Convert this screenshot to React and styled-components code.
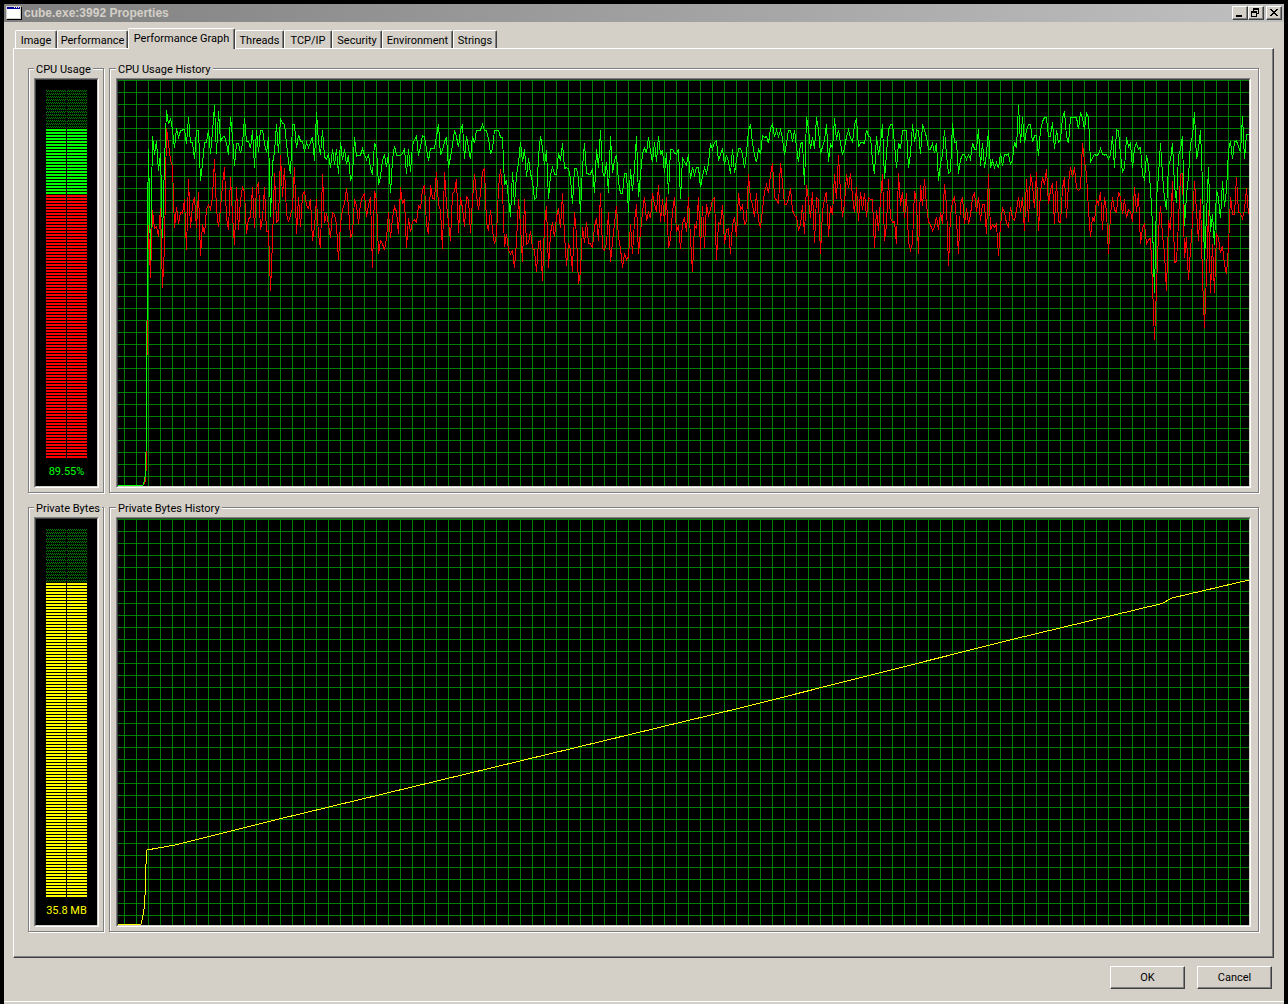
import React, { useState } from "react";
import styled, { createGlobalStyle, css } from "styled-components";

const GlobalStyle = createGlobalStyle`
  * {
    box-sizing: border-box;
  }

  body {
    margin: 0;
    background: #000;
  }

  body, button {
    font-family: Roboto, "Liberation Sans", Arial, sans-serif;
    font-size: 11px;
    line-height: 14px;
    color: #000;
  }
`;

const raised = css`
  border: 1px solid;
  border-color: #fff #404040 #404040 #fff;
  box-shadow: inset -1px -1px 0 #808080;
`;

// One green pixel per row, shifted on every other row
const hatch =
  "url(\"data:image/svg+xml,%3Csvg xmlns='http://www.w3.org/2000/svg' width='2' height='2' shape-rendering='crispEdges'%3E%3Cpath d='M0 0h1v1H0zM1 1h1v1H1z' fill='%23008000'/%3E%3C/svg%3E\")";

const Window = styled.div`
  display: flex;
  flex-direction: column;
  min-height: 100vh;
  border: 4px solid #000;
  border-bottom: 0;
  background: #d4d0c8;
`;

const TitleBar = styled.header`
  display: flex;
  align-items: center;
  height: 18px;
  padding: 0 2px;
  background: linear-gradient(90deg, #808080, #c0c0c0);
`;

const Title = styled.h1`
  flex: 1;
  margin: 0;
  padding-left: 2px;
  font-family: "Liberation Sans", Arial, sans-serif;
  font-size: 12px;
  font-weight: bold;
  line-height: 18px;
  color: #d4d0c8;
`;

const TitleButton = styled.button`
  ${raised}
  display: flex;
  width: 16px;
  height: 14px;
  margin-left: ${(props) => (props.$apart ? "2px" : "0")};
  padding: 0;
  background: #d4d0c8;
`;

const TabList = styled.div`
  display: flex;
  align-items: flex-end;
  height: 21px;
  margin: 6px 11px -1px;
  position: relative;
`;

const Tab = styled.button`
  width: ${(props) => props.$width}px;
  height: ${(props) => (props.$active ? "21px" : "18px")};
  margin-bottom: ${(props) => (props.$active ? "0" : "1px")};
  padding: ${(props) => (props.$active ? "0" : "2px 0 0")};
  border: 1px solid;
  border-color: #fff #404040 transparent #fff;
  border-bottom: 0;
  border-radius: 2px 2px 0 0;
  box-shadow: inset -1px 0 0 #808080;
  background: #d4d0c8;
  white-space: nowrap;
`;

const Panel = styled.main`
  ${raised}
  display: flex;
  flex: 1;
  flex-direction: column;
  gap: 7px;
  margin: 0 10px 0 9px;
  padding: 12px 14px 25px;
`;

const Row = styled.div`
  display: flex;
  flex: 1;
  gap: 5px;
`;

const Group = styled.fieldset`
  display: flex;
  flex: ${(props) => (props.$narrow ? "0 0 76px" : "1")};
  min-width: 0;
  margin: 0;
  padding: ${(props) => (props.$narrow ? "3px 4px 4px 5px" : "3px 7px 4px 6px")};
  border: 1px solid #808080;
  box-shadow: 1px 1px 0 #fff, inset 1px 1px 0 #fff;
`;

const Legend = styled.legend`
  height: 14px;
  padding: 0 2px;
  background: #d4d0c8;
  line-height: 18px;
  white-space: nowrap;
`;

const Well = styled.div`
  display: flex;
  flex: 1;
  min-width: 0;
  border: 1px solid;
  border-color: #808080 #fff #fff #808080;
  background: #000;
`;

const WellInner = styled.div`
  display: flex;
  flex: 1;
  flex-direction: column;
  align-items: center;
  min-width: 0;
  border: 1px solid;
  border-color: #404040 #d4d0c8 #d4d0c8 #404040;
`;

const Bars = styled.div`
  display: flex;
  flex: 1;
  flex-direction: column;
  width: 41px;
  margin-top: 10px;
`;

const BarRun = styled.div`
  flex: ${(props) => props.$bars};
  background:
    linear-gradient(90deg, transparent 20px, #000 20px 21px, transparent 21px),
    repeating-linear-gradient(transparent 0 2px, #000 2px 3px),
    ${(props) => props.$color || hatch};
`;

const Reading = styled.div`
  margin: 6px 0 7px;
  color: ${(props) => props.$color};
`;

const Grid = styled.div`
  flex: 1;
  align-self: stretch;
  display: flex;
  min-height: 0;
  background:
    linear-gradient(#008000 1px, transparent 1px) 0 0 / 12px 12px,
    linear-gradient(90deg, #008000 1px, transparent 1px) 6px 0 / 12px 12px;
`;

const Plot = styled.svg`
  flex: 1;
  width: 0;
  min-height: 0;
  contain: size;

  polyline {
    fill: none;
    stroke-width: 1px;
    vector-effect: non-scaling-stroke;
    shape-rendering: crispEdges;
  }
`;

const Footer = styled.footer`
  display: flex;
  justify-content: flex-end;
  gap: 12px;
  padding: 8px 12px 12px;
`;

const PushButton = styled.button`
  ${raised}
  width: 75px;
  height: 23px;
  padding: 0;
  background: #d4d0c8;
`;

const BottomEdge = styled.div`
  height: 3px;
  border-top: 1px solid #fff;
`;

// Runs of samples, one every two units from the given start.
// Values are measured downwards from the top of the scale (15 to 1233).
const TOTAL = [
  [31, "222 555 183 240 198 288 235 490 260 105 148 130 165 220 160 187 168 165 163 207 127 203 203 253 165 165 317 265 203 203 165 237 170 90 238 108 200 187 184 205 240 127 185 272 205 205 235 205 128 200 200 220 165 278 165 232 165 165 205 232 187 425 265 232 148 235 130 145 148 205 260 297 148 148 220 180 198 198 230 203 217 203 185 257 112 200 240 165 245 253 238 280 222 270 222 297 200 255 222 268 240 317 300 187 245 240 240 222 240 253 240 280 300 203 220 330 305 255 240 275 235 355 255 213 240 240"],
  [283, "242 235 222 297 222 290 210 195 183 242 215 182 185 222 257 220 220 220 185 148 240 225 200 187 280 245 210 165 185 217 165 148 253 182 220 253 182 205 165 165 165 148 165 168 190 238 220 165 165 165 187 187 330 315 370 425 290 390 300 265 200 262 222 307 250 295 320 373 368 245 183 220 270 225 373 300 277 297 297 235 257 205 280 278 282 310 388 280 282 310 412 275 205 295 297 297 280 355 222 278 165 290 307 262 355 182 295 255 240 320 355 355 295 295 412 282 348 280 183 367 300 235 220 235 187 230 262 200 262 182 240 225 295 235 358 222 222 235 238 222"],
  [563, "373 250 262 270 238 313 277 300 277 277 337 305 277 295 265 205 222 202 197 257 238 220 270 240 260 297 222 295 255 222 220 240 280 235 165 148 205 240 262 220 238 183 187 185 205 160 148 185 165 185 165 190 240 205 165 165 200 165 215 262 205 203 330 127 160 222 185 222 127 165 238 215 195 148 262 205 220 130 195 165 205 240 220 185 165 187 203 150 130 217 203 203 205 165 183 187 255 297 183 240 205 148 313 235 165 148 148 205 280 203 222 165 165 167 278 235 148 200 165 167 238 148 165 187 222 222 205 235 203 317 265 240 165 240 295 290 145 203 200 297"],
  [843, "255 238 240 253 240 253 203 222 222 163 272 203 278 235 165 280 257 277 263 280 235 272 238 240 237 268 255 200 220 90 205 127 205 165 150 148 202 183 182 242 165 140 128 128 185 183 142 222 165 203 195 128 108 185 205 127 127 127 127 163 112 130 165 112 127 262 250 238 242 238 220 238 240 238 253 240 183 278 165 167 240 290 280 187 215 205 278 220 205 222 217 300 313 240 270 340 450 655 370 300 205 300 370 405 270 255 205 330 383 240 225 183 453 360 305 205 185 112 253 220 165 330 555 420 277 470 418 510 345 370 430 318 395 345 225 198 253 200 198 215 232 123 253 178 180"],
];

const KERNEL = [
  [31, "450 608 405 460 455 485 400 638 515 160 205 255 275 460 395 447 412 415 373 525 313 460 390 365 460 350 542 448 478 403 390 403 365 253 405 455 400 330 277 430 465 307 420 510 337 465 375 337 350 478 430 428 337 460 340 322 465 430 337 470 468 647 500 295 442 435 240 365 280 415 442 420 400 277 478 365 455 360 350 390 400 373 497 455 373 480 518 298 445 415 450 488 412 418 450 555 445 405 385 340 395 488 475 373 390 447 385 365 357 425 390 367 580 348 375 537 497 507 525 490 412 488 430 395 410 478"],
  [283, "337 388 373 518 430 472 440 435 442 392 400 345 330 450 478 330 370 373 290 390 405 523 290 390 440 497 355 350 313 473 365 400 455 365 375 473 375 297 360 405 355 290 282 445 467 405 465 507 480 340 282 345 517 478 525 537 527 580 500 373 450 562 373 507 503 467 520 525 590 500 497 617 450 392 580 475 442 487 425 400 460 355 480 572 505 525 590 412 480 628 590 455 505 440 505 507 517 455 430 497 355 520 525 505 412 562 500 445 392 487 520 580 535 555 545 448 537 440 388 537 470 412 365 437 412 430 355 388 410 330 442 373 440 365 520 490 410 367 470 450"],
  [563, "523 445 430 470 367 490 590 450 460 367 525 392 518 388 422 405 373 367 555 443 447 390 507 465 460 537 450 425 487 355 405 392 448 440 298 370 390 425 355 435 458 405 350 330 355 300 263 367 375 388 263 325 388 388 372 340 405 422 425 465 450 390 478 330 375 430 350 505 367 373 537 410 370 350 487 392 420 298 373 240 355 425 385 298 340 295 365 412 337 437 350 405 355 425 367 373 373 518 405 467 375 298 497 450 313 430 442 440 507 295 392 350 430 355 500 525 505 347 380 537 330 392 313 390 440 450 467 455 425 465 412 447 328 390 572 420 380 367 435 537"],
  [843, "385 367 447 400 447 420 367 355 410 365 437 388 388 478 298 465 450 457 448 542 450 400 410 445 455 395 430 437 405 367 410 367 467 313 440 298 330 400 290 467 350 307 330 282 388 345 325 447 317 440 442 340 307 430 325 277 307 277 340 347 340 205 260 297 405 487 425 440 373 388 350 465 367 410 537 420 367 405 412 350 367 418 373 430 403 410 440 337 412 355 507 460 447 507 495 490 630 795 640 470 392 480 535 647 435 465 317 562 560 440 298 295 550 487 615 525 440 317 410 497 373 610 758 600 405 655 508 655 475 490 535 512 570 598 515 365 418 418 307 412 415 430 405 340 418"],
];

const toPoints = (runs) =>
  runs
    .map(([start, values]) =>
      values
        .split(" ")
        .map((value, i) => `${start + i * 2 + 0.5},${value}`)
        .join(" ")
    )
    .join(" ");

const totalPoints =
  "0,1231 26,1231 27,1222 28.5,1200 28.8,1150 29.5,1080 30.5,420 " +
  toPoints(TOTAL);
const kernelPoints =
  "0,1231 26,1231 28,1222 29.2,1180 29.5,1110 30.5,600 " + toPoints(KERNEL);
const memoryPoints =
  "0,405.5 24,405.5 26,396 27,390 28,376 29,345 30,331 58,326 158,301 403,242 623,189 893,121 1043,85 1046,84 1055,79 1132,61";

const TABS = [
  ["Image", 42],
  ["Performance", 71],
  ["Performance Graph", 107],
  ["Threads", 49],
  ["TCP/IP", 48],
  ["Security", 50],
  ["Environment", 71],
  ["Strings", 44],
];

const AppIcon = () => (
  <svg width="16" height="16" viewBox="0 0 16 16" shapeRendering="crispEdges">
    <path d="M1 14V15H16V2H15V14Z" fill="#000" />
    <path d="M0 1H15V14H0Z" fill="#d4d0c8" />
    <path d="M1 4H14V13H1Z" fill="#fff" />
    <path d="M1 2H14V4H1Z" fill="#0000a0" />
    <path d="M8 2H9V3H8ZM10 2H11V3H10ZM12 2H13V3H12Z" fill="#fff" />
  </svg>
);

const Glyph = ({ d }) => (
  <svg width="14" height="12" viewBox="0 0 14 12" shapeRendering="crispEdges">
    <path d={d} fill="#000" />
  </svg>
);

const MINIMIZE = "M3 8H9V10H3Z";
const RESTORE =
  "M4 1H10V7H8V6H9V3H5V4H4ZM2 4H8V10H2ZM3 6V9H7V6Z";
const CLOSE =
  "M3 2H5V3H6V4H8V3H9V2H11V3H10V4H9V5H8V6H9V7H10V8H11V9H9V8H8V7H6V8H5V9H3V8H4V7H5V6H6V5H5V4H4V3H3Z";

const Meter = ({ label, runs, reading, color }) => (
  <Group $narrow>
    <Legend>{label}</Legend>
    <Well>
      <WellInner>
        <Bars>
          {runs.map(([bars, fill], i) => (
            <BarRun key={i} $bars={bars} $color={fill} />
          ))}
        </Bars>
        <Reading $color={color}>{reading}</Reading>
      </WellInner>
    </Well>
  </Group>
);

const History = ({ label, viewBox, children }) => (
  <Group>
    <Legend>{label}</Legend>
    <Well>
      <WellInner>
        <Grid>
          <Plot viewBox={viewBox} preserveAspectRatio="none" aria-label={label}>
            {children}
          </Plot>
        </Grid>
      </WellInner>
    </Well>
  </Group>
);

const App = () => {
  const [active, setActive] = useState("Performance Graph");

  return (
    <>
      <GlobalStyle />
      <Window>
        <TitleBar>
          <AppIcon />
          <Title>cube.exe:3992 Properties</Title>
          <TitleButton aria-label="Minimize">
            <Glyph d={MINIMIZE} />
          </TitleButton>
          <TitleButton aria-label="Restore">
            <Glyph d={RESTORE} />
          </TitleButton>
          <TitleButton aria-label="Close" $apart>
            <Glyph d={CLOSE} />
          </TitleButton>
        </TitleBar>
        <TabList role="tablist">
          {TABS.map(([name, width]) => (
            <Tab
              key={name}
              role="tab"
              aria-selected={name === active}
              $active={name === active}
              $width={width}
              onClick={() => setActive(name)}
            >
              {name}
            </Tab>
          ))}
        </TabList>
        <Panel>
          <Row>
            <Meter
              label="CPU Usage"
              runs={[[13], [22, "#00ff00"], [88, "#ff0000"]]}
              reading="89.55%"
              color="#00ff00"
            />
            <History label="CPU Usage History" viewBox="1 15 1131 1218">
              <polyline points={kernelPoints} stroke="#ff0000" />
              <polyline points={totalPoints} stroke="#00ff00" />
            </History>
          </Row>
          <Row>
            <Meter
              label="Private Bytes"
              runs={[[18], [105, "#ffff00"]]}
              reading="35.8 MB"
              color="#ffff00"
            />
            <History label="Private Bytes History" viewBox="1 0 1131 406">
              <polyline points={memoryPoints} stroke="#ffff00" />
            </History>
          </Row>
        </Panel>
        <Footer>
          <PushButton>OK</PushButton>
          <PushButton>Cancel</PushButton>
        </Footer>
        <BottomEdge />
      </Window>
    </>
  );
};

export default App;
